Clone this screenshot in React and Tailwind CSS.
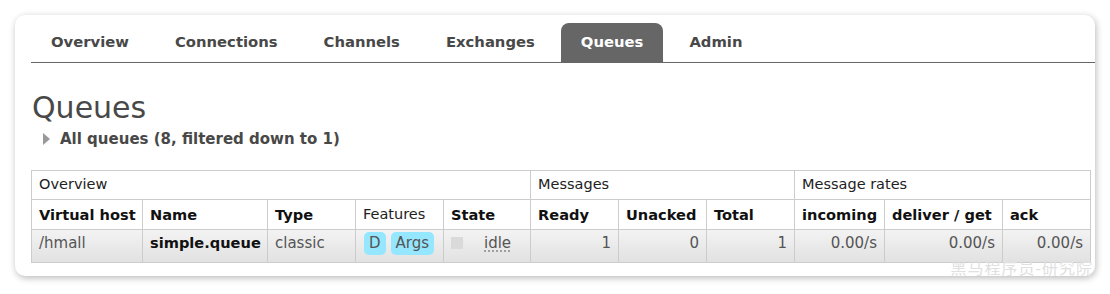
import React from 'react'

const tabs = ['Overview', 'Connections', 'Channels', 'Exchanges', 'Queues', 'Admin']

const cols = [111, 125, 88, 88, 87, 88, 88, 88, 90, 118, 88]

const th = 'border border-[#ccc] px-[7px] text-left whitespace-nowrap'
const td = 'border border-[#ccc] px-[7px] pt-[2px] whitespace-nowrap'

export default function App() {
  return (
    <div className="min-h-[294px] bg-white pt-[15px] pl-[15px]" style={{ fontFamily: '"DejaVu Sans", Verdana, sans-serif' }}>
      <div className="relative w-[1080px] h-[261px] rounded-[10px] bg-white pl-4 pt-2 shadow-[1px_2px_7px_rgba(0,0,0,0.28)]">
        {/* Tabs */}
        <div className="flex items-end gap-[6px] border-b border-[#666]">
          {tabs.map((t) => (
            <div
              key={t}
              className={
                t === 'Queues'
                  ? 'h-[39px] px-5 flex items-center rounded-t-[8px] bg-[#666] text-white text-[14.8px] font-bold'
                  : 'h-[39px] px-5 flex items-center text-[#484848] text-[14.8px] font-bold'
              }
            >
              {t}
            </div>
          ))}
        </div>

        <h1 className="mt-[27px] text-[30px] leading-[36px] text-[#484848] pl-px">Queues</h1>

        <div className="mt-[3px] flex items-center gap-[10px] pl-[12px] h-5">
          <span className="inline-block w-0 h-0 border-y-[6px] border-y-transparent border-l-[7px] border-l-[#999]" />
          <span className="text-[15px] font-bold text-[#484848]">All queues (8, filtered down to 1)</span>
        </div>

        {/* Table */}
        <table className="mt-[21px] table-fixed border-collapse w-[1059px] text-[15px]">
          <colgroup>
            {cols.map((w, i) => (
              <col key={i} style={{ width: w }} />
            ))}
          </colgroup>
          <thead>
            <tr className="h-[29px] text-[14.5px] text-[#222]">
              <th colSpan={5} className={th + ' font-normal'}>Overview</th>
              <th colSpan={3} className={th + ' font-normal'}>Messages</th>
              <th colSpan={3} className={th + ' font-normal'}>Message rates</th>
            </tr>
            <tr className="h-[30px] text-[14.6px] text-[#111] font-bold">
              <th className={th}>Virtual host</th>
              <th className={th}>Name</th>
              <th className={th}>Type</th>
              <th className={th + ' font-normal text-[14.5px] text-[#222]'}>Features</th>
              <th className={th}>State</th>
              <th className={th}>Ready</th>
              <th className={th}>Unacked</th>
              <th className={th}>Total</th>
              <th className={th}>incoming</th>
              <th className={th}>deliver / get</th>
              <th className={th}>ack</th>
            </tr>
          </thead>
          <tbody>
            <tr className="h-[33px] bg-gradient-to-b from-[#f3f3f3] to-[#e1e1e1] text-[#555] align-top">
              <td className={td}>/hmall</td>
              <td className={td + ' font-bold text-[#111] text-[14.6px]'}>simple.queue</td>
              <td className={td}>classic</td>
              <td className="border border-[#ccc] px-[8px] pt-[2px]">
                <div className="flex gap-[5px]">
                  <span className="rounded-[5px] bg-[#94e7ff] px-[5px] leading-[23px]">D</span>
                  <span className="rounded-[5px] bg-[#94e7ff] px-[5px] leading-[23px]">Args</span>
                </div>
              </td>
              <td className={td}>
                <div className="flex items-center h-[22px]">
                  <span className="inline-block w-3 h-3 bg-[#dadada]" />
                  <span className="ml-[21px] underline decoration-dotted decoration-[#888] underline-offset-[3px]">idle</span>
                </div>
              </td>
              <td className={td + ' text-right'}>1</td>
              <td className={td + ' text-right'}>0</td>
              <td className={td + ' text-right'}>1</td>
              <td className={td + ' text-right'}>0.00/s</td>
              <td className={td + ' text-right'}>0.00/s</td>
              <td className={td + ' text-right'}>0.00/s</td>
            </tr>
          </tbody>
        </table>

        <div
          className="absolute right-[2px] bottom-0 text-[16px] leading-[18px] tracking-[1px] text-[#e0e0e0]"
          style={{ fontFamily: '"Noto Sans CJK SC", sans-serif' }}
        >
          黑马程序员-研究院
        </div>
      </div>
    </div>
  )
}
